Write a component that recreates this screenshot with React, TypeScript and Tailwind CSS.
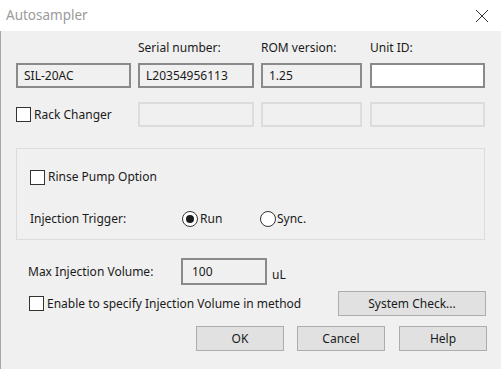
import { useState } from "react";

const font = { fontFamily: '"Noto Sans", "DejaVu Sans", sans-serif' };

function CheckBox({ checked = false }: { checked?: boolean }) {
  return (
    <span className="inline-flex h-[15px] w-[15px] shrink-0 items-center justify-center border border-[#333] bg-white">
      {checked && <span className="text-[10px] leading-none">✓</span>}
    </span>
  );
}

function Radio({ checked }: { checked: boolean }) {
  return (
    <span className="inline-flex h-[16px] w-[16px] shrink-0 items-center justify-center rounded-full border border-[#333] bg-white">
      {checked && <span className="h-[8px] w-[8px] rounded-full bg-[#1a1a1a]" />}
    </span>
  );
}

function Field({ value, w, white = false }: { value?: string; w: string; white?: boolean }) {
  return (
    <div
      className={`${w} flex h-[25px] items-center border-2 border-[#8a8a8a] pl-[6px] text-[12px] text-[#1a1a1a] ${
        white ? "bg-white" : "bg-[#f0f0f0]"
      }`}
    >
      {value}
    </div>
  );
}

function Dimmed({ w }: { w: string }) {
  return <div className={`${w} h-[25px] border-2 border-[#dcdcdc] bg-[#f0f0f0]`} />;
}

function Button({ label, w }: { label: string; w: string }) {
  return (
    <button className={`${w} h-[25px] border border-[#adadad] bg-[#e1e1e1] text-[12px] text-[#1a1a1a]`}>
      {label}
    </button>
  );
}

export default function App() {
  const [trigger] = useState("run");

  return (
    <div className="flex h-[369px] w-[501px] flex-col overflow-hidden bg-[#f0f0f0] text-[#1a1a1a]" style={font}>
      {/* title bar */}
      <div className="flex h-[31px] shrink-0 items-center justify-between bg-white pl-[6px] pr-[12px]">
        <span className="text-[13.5px] text-[#9a9a9a]">Autosampler</span>
        <svg width="14" height="14" viewBox="0 0 14 14" className="mt-[1px]">
          <path d="M1 1 L13 13 M13 1 L1 13" stroke="#333" strokeWidth="1" />
        </svg>
      </div>

      <div className="flex-1 border-l border-[#a8a8a8] pl-[15px] text-[12px]">
        {/* column headers */}
        <div className="mt-[9px] flex h-[16px] items-center leading-[16px]">
          <span className="ml-[122px] w-[123px]">Serial number:</span>
          <span className="w-[109px]">ROM version:</span>
          <span>Unit ID:</span>
        </div>

        <div className="mt-[7px] flex">
          <Field value="SIL-20AC" w="w-[115px]" />
          <div className="ml-[7px]">
            <Field value="L20354956113" w="w-[116px]" />
          </div>
          <div className="ml-[7px]">
            <Field value="1.25" w="w-[101px]" />
          </div>
          <div className="ml-[8px]">
            <Field w="w-[115px]" white />
          </div>
        </div>

        <div className="mt-[14px] flex items-center">
          <div className="flex w-[122px] items-center gap-[3px]">
            <CheckBox />
            <span>Rack Changer</span>
          </div>
          <Dimmed w="w-[116px]" />
          <div className="ml-[7px]">
            <Dimmed w="w-[101px]" />
          </div>
          <div className="ml-[8px]">
            <Dimmed w="w-[115px]" />
          </div>
        </div>

        {/* rinse group */}
        <div className="mt-[21px] h-[92px] w-[469px] border border-[#dcdcdc] pl-[13px] pt-[19px]">
          <div className="flex items-center gap-[3px]">
            <CheckBox />
            <span>Rinse Pump Option</span>
          </div>
          <div className="mt-[24px] flex items-center">
            <span className="w-[152px]">Injection Trigger:</span>
            <div className="flex w-[78px] items-center gap-[2px]">
              <Radio checked={trigger === "run"} />
              <span>Run</span>
            </div>
            <div className="flex items-center gap-[1px]">
              <Radio checked={trigger === "sync"} />
              <span>Sync.</span>
            </div>
          </div>
        </div>

        <div className="mt-[18px] flex h-[27px] items-center">
          <span className="ml-[12px] w-[153px]">Max Injection Volume:</span>
          <div className="flex h-[27px] w-[86px] items-start border-2 border-[#8a8a8a] pl-[9px] pt-[3px]">100</div>
          <span className="ml-[5px] mt-[6px]">uL</span>
        </div>

        <div className="mt-[6px] flex h-[25px] items-center">
          <div className="ml-[13px] flex w-[309px] items-center gap-[3px]">
            <CheckBox />
            <span>Enable to specify Injection Volume in method</span>
          </div>
          <Button label="System Check..." w="w-[148px]" />
        </div>

        <div className="mt-[10px] flex">
          <div className="ml-[180px]">
            <Button label="OK" w="w-[88px]" />
          </div>
          <div className="ml-[13px]">
            <Button label="Cancel" w="w-[88px]" />
          </div>
          <div className="ml-[14px]">
            <Button label="Help" w="w-[88px]" />
          </div>
        </div>
      </div>
    </div>
  );
}
